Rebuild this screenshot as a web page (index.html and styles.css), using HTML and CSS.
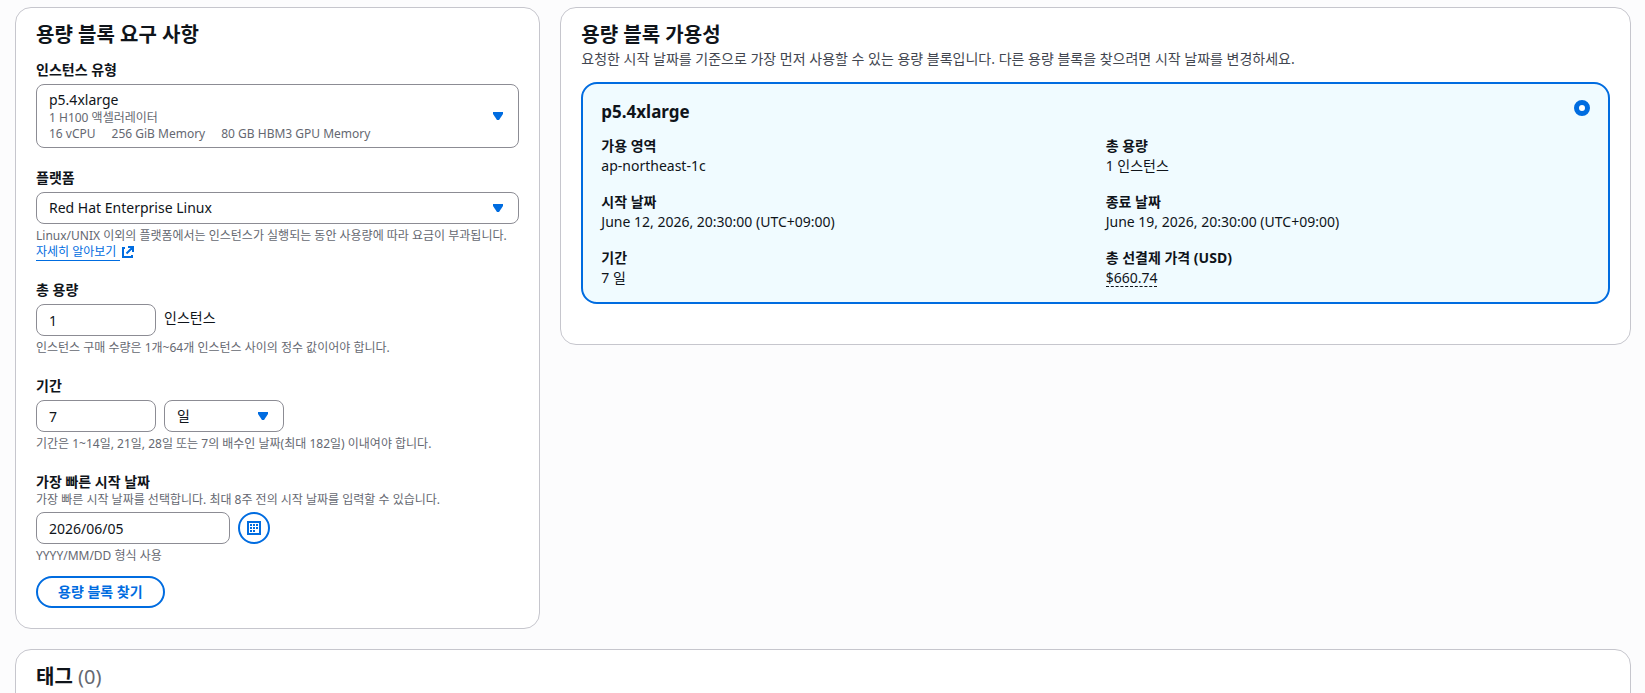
FILE: index.html
```html
<!DOCTYPE html>
<html lang="ko">
<head>
<meta charset="utf-8">
<title>용량 블록 찾기</title>
<link rel="stylesheet" href="styles.css">
</head>
<body>
<main class="page">
  <div class="columns">
    <form class="card requirements">
      <h2 class="card-title">용량 블록 요구 사항</h2>
      <div class="fields">
        <div class="field">
          <label class="label" for="instance-type">인스턴스 유형</label>
          <button type="button" class="control rich-select" id="instance-type" aria-haspopup="listbox">
            <span class="rich-text">
              <span class="rich-name">p5.4xlarge</span>
              <span class="rich-line">1 H100 액셀러레이터</span>
              <span class="rich-line rich-tags"><span>16 vCPU</span><span>256 GiB Memory</span><span>80 GB HBM3 GPU Memory</span></span>
            </span>
            <svg class="caret" viewBox="0 0 16 16" aria-hidden="true"><path d="M3 4h10v2l-4 6H7L3 6z"/></svg>
          </button>
        </div>
        <div class="field">
          <label class="label" for="platform">플랫폼</label>
          <div class="select-wrap">
            <select class="control" id="platform"><option>Red Hat Enterprise Linux</option></select>
            <svg class="caret" viewBox="0 0 16 16" aria-hidden="true"><path d="M3 4h10v2l-4 6H7L3 6z"/></svg>
          </div>
          <p class="hint">Linux/UNIX 이외의 플랫폼에서는 인스턴스가 실행되는 동안 사용량에 따라 요금이 부과됩니다. <a class="link" href="#learn-more"><span class="link-text">자세히 알아보기&nbsp;</span><svg class="external" viewBox="0 0 16 16" aria-hidden="true"><path d="M8 3h5v5M6.500 9.500L12.500 3.500M5 4H3v9h9v-2"/></svg></a></p>
        </div>
        <div class="field">
          <label class="label" for="capacity">총 용량</label>
          <div class="row">
            <input class="control short" id="capacity" type="text" inputmode="numeric" value="1">
            <span class="unit">인스턴스</span>
          </div>
          <p class="hint">인스턴스 구매 수량은 1개~64개 인스턴스 사이의 정수 값이어야 합니다.</p>
        </div>
        <div class="field">
          <label class="label" for="duration">기간</label>
          <div class="row">
            <input class="control short" id="duration" type="text" inputmode="numeric" value="7">
            <div class="select-wrap short">
              <select class="control" aria-label="기간 단위"><option>일</option></select>
              <svg class="caret" viewBox="0 0 16 16" aria-hidden="true"><path d="M3 4h10v2l-4 6H7L3 6z"/></svg>
            </div>
          </div>
          <p class="hint">기간은 1~14일, 21일, 28일 또는 7의 배수인 날짜(최대 182일) 이내여야 합니다.</p>
        </div>
        <div class="field">
          <label class="label" for="start-date">가장 빠른 시작 날짜</label>
          <p class="description">가장 빠른 시작 날짜를 선택합니다. 최대 8주 전의 시작 날짜를 입력할 수 있습니다.</p>
          <div class="row">
            <input class="control date" id="start-date" type="text" value="2026/06/05">
            <button type="button" class="calendar-button" aria-label="달력 열기">
              <svg class="calendar" viewBox="0 0 16 16" aria-hidden="true"><path class="calendar-frame" d="M2 2h12v12H2z"/><path class="calendar-dots" d="M4 4h2v2H4zM7 4h2v2H7zM10 4h2v2h-2zM4 7h2v2H4zM7 7h2v2H7zM10 7h2v2h-2zM4 10h2v2H4zM7 10h2v2H7z"/></svg>
            </button>
          </div>
          <p class="hint">YYYY/MM/DD 형식 사용</p>
        </div>
      </div>
      <button type="button" class="find-button">용량 블록 찾기</button>
    </form>

    <section class="card availability">
      <h2 class="card-title">용량 블록 가용성</h2>
      <p class="card-description">요청한 시작 날짜를 기준으로 가장 먼저 사용할 수 있는 용량 블록입니다. 다른 용량 블록을 찾으려면 시작 날짜를 변경하세요.</p>
      <div class="offer">
        <div class="offer-head">
          <label class="offer-title" for="offer">p5.4xlarge</label>
          <input class="radio" type="radio" id="offer" name="offer" checked>
        </div>
        <dl class="details">
          <div><dt>가용 영역</dt><dd>ap-northeast-1c</dd></div>
          <div><dt>총 용량</dt><dd>1 인스턴스</dd></div>
          <div><dt>시작 날짜</dt><dd>June 12, 2026, 20:30:00 (UTC+09:00)</dd></div>
          <div><dt>종료 날짜</dt><dd>June 19, 2026, 20:30:00 (UTC+09:00)</dd></div>
          <div><dt>기간</dt><dd>7 일</dd></div>
          <div><dt>총 선결제 가격 (USD)</dt><dd><button type="button" class="price">$660.74</button></dd></div>
        </dl>
      </div>
    </section>
  </div>

  <section class="card tags">
    <h2 class="card-title">태그 <span class="counter">(0)</span></h2>
  </section>
</main>
</body>
</html>
```
FILE: styles.css
```css
:root {
  --blue: #006ce0;
  --text: #0f141a;
  --muted: #656871;
  --line: #c6c6cd;
  --control-line: #8c8c94;
}

* { box-sizing: border-box; }

body {
  margin: 0;
  height: 100vh;
  overflow: hidden;
  background: #fcfcfd;
  color: var(--text);
  font: 14px/20px "Noto Sans", "Noto Sans CJK KR", sans-serif;
}

h2, p, dl, dd { margin: 0; }
button, input, select { font: inherit; color: inherit; }

.page {
  display: flex;
  flex-direction: column;
  gap: 20px;
  padding: 7px 14px 20px 15px;
}

.columns {
  display: grid;
  grid-template-columns: repeat(12, minmax(0, 1fr));
  gap: 20px;
  align-items: start;
}

.card {
  padding: 15px 20px 20px;
  border: 1px solid var(--line);
  border-radius: 16px;
  background: #fff;
}

.requirements { grid-column: span 4; }
.availability { grid-column: span 8; padding-bottom: 40px; }

.card-title {
  font-size: 20px;
  line-height: 24px;
  font-weight: 700;
}

.card-description { margin: 2px 0 13px; color: #424650; }
.counter { color: var(--muted); font-weight: 400; }

.fields {
  display: flex;
  flex-direction: column;
  gap: 20px;
  margin: 13px 0 12px;
}

.label { display: block; margin-bottom: 4px; font-weight: 700; }
.label:has(+ .description) { margin-bottom: 0; }

.hint, .description {
  color: var(--muted);
  font-size: 12px;
  line-height: 16px;
}
.hint { margin-top: 4px; }
.description { margin-bottom: 4px; }

.control {
  display: block;
  width: 100%;
  height: 32px;
  padding: 0 12px;
  border: 1px solid var(--control-line);
  border-radius: 8px;
  background: #fff;
  appearance: none;
}

.rich-select {
  display: flex;
  align-items: center;
  justify-content: space-between;
  height: auto;
  padding: 5px 12px;
  text-align: left;
}
.rich-text { display: flex; flex-direction: column; }
.rich-line { color: var(--muted); font-size: 12px; line-height: 16px; }
.rich-tags { display: flex; gap: 16px; }

.caret { width: 16px; height: 16px; fill: var(--blue); }

.select-wrap { display: grid; align-items: center; }
.select-wrap > * { grid-area: 1 / 1; }
.select-wrap > .caret { justify-self: end; margin-right: 13px; pointer-events: none; }

.row { display: flex; gap: 8px; }
.short { width: 120px; }
.date { width: 194px; }
.unit { padding-top: 4px; }

.link { color: var(--blue); text-decoration: none; white-space: nowrap; }
.link-text { border-bottom: 1px solid var(--blue); }
.external {
  width: 16px;
  height: 16px;
  vertical-align: top;
  fill: none;
  stroke: var(--blue);
  stroke-width: 2;
}

.calendar-button {
  display: grid;
  place-items: center;
  width: 32px;
  height: 32px;
  padding: 0;
  border: 2px solid var(--blue);
  border-radius: 50%;
  background: #fff;
}
.calendar { width: 16px; height: 16px; }
.calendar-frame { fill: none; stroke: var(--blue); stroke-width: 2; }
.calendar-dots { fill: var(--blue); }

.find-button {
  display: block;
  height: 32px;
  padding: 0 20px;
  border: 2px solid var(--blue);
  border-radius: 20px;
  background: #fff;
  color: var(--blue);
  font-weight: 700;
}

.offer {
  padding: 16px 18px 14px;
  border: 2px solid var(--blue);
  border-radius: 16px;
  background: #f0fbff;
}
.offer-head {
  display: flex;
  justify-content: space-between;
  align-items: flex-start;
  margin-bottom: 12px;
}
.offer-title { font-size: 17px; line-height: 24px; font-weight: 700; }

.radio {
  width: 16px;
  height: 16px;
  margin: 0;
  border: 5px solid var(--blue);
  border-radius: 50%;
  background: #fff;
  appearance: none;
}

.details {
  display: grid;
  grid-template-columns: 1fr 1fr;
  gap: 16px 20px;
}
.details dt { font-weight: 700; }

.price {
  display: block;
  height: 19px;
  padding: 0;
  border: 0;
  border-bottom: 1px dashed var(--text);
  background: none;
}
```
